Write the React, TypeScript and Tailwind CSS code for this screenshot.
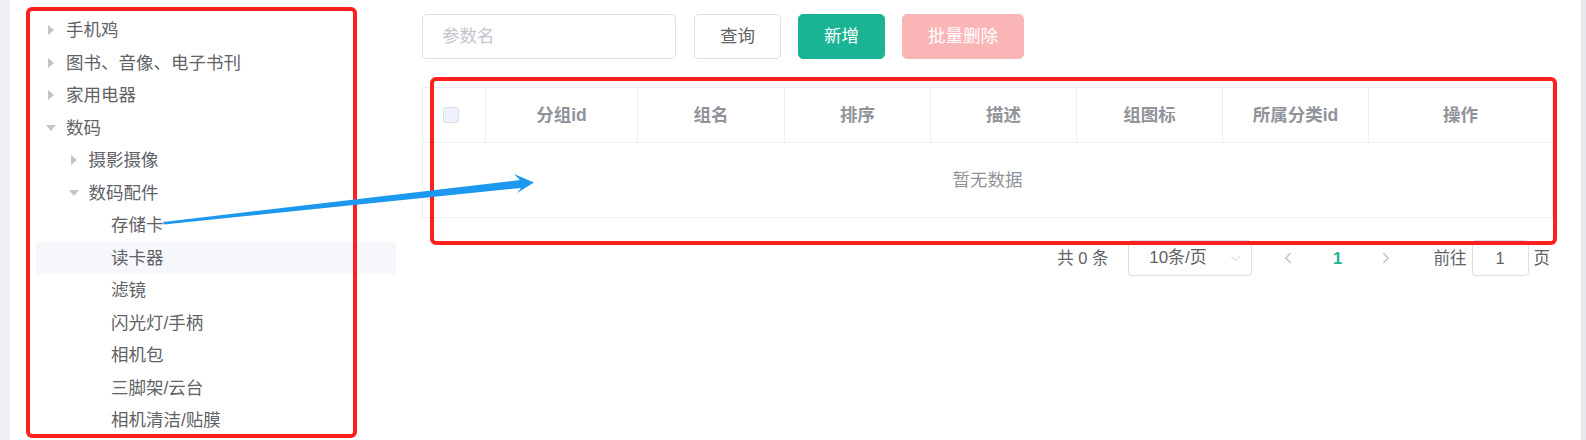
import { ChevronDown, ChevronLeft, ChevronRight } from "lucide-react";

type TreeNode = {
    label: string;
    level: number;
    expanded?: boolean;
    leaf?: boolean;
    current?: boolean;
};

const nodes: TreeNode[] = [
    { label: "手机鸡", level: 0 },
    { label: "图书、音像、电子书刊", level: 0 },
    { label: "家用电器", level: 0 },
    { label: "数码", level: 0, expanded: true },
    { label: "摄影摄像", level: 1 },
    { label: "数码配件", level: 1, expanded: true },
    { label: "存储卡", level: 2, leaf: true },
    { label: "读卡器", level: 2, leaf: true, current: true },
    { label: "滤镜", level: 2, leaf: true },
    { label: "闪光灯/手柄", level: 2, leaf: true },
    { label: "相机包", level: 2, leaf: true },
    { label: "三脚架/云台", level: 2, leaf: true },
    { label: "相机清洁/贴膜", level: 2, leaf: true },
];

const columns = [
    { title: "分组id", w: "w-[152px]" },
    { title: "组名", w: "w-[147px]" },
    { title: "排序", w: "w-[146px]" },
    { title: "描述", w: "w-[146px]" },
    { title: "组图标", w: "w-[146px]" },
    { title: "所属分类id", w: "w-[146px]" },
    { title: "操作", w: "flex-1" },
];

const indent = ["pl-0", "pl-[22.5px]", "pl-[45px]"];

function Caret({ expanded }: { expanded?: boolean }) {
    return expanded ? (
        <svg width="10" height="6" viewBox="0 0 10 6">
            <polygon points="0,0 10,0 5,6" fill="#c0c4cc" />
        </svg>
    ) : (
        <svg width="6" height="10" viewBox="0 0 6 10">
            <polygon points="0,0 6,5 0,10" fill="#c0c4cc" />
        </svg>
    );
}

function CategoryTree() {
    return (
        <div className="w-[360px]">
            {nodes.map((node) => (
                <div
                    key={node.label}
                    className={`flex h-[32.5px] items-center ${indent[node.level]} ${node.current ? "bg-[#f5f7fa]" : ""}`}
                >
                    <span className="flex h-[30px] w-[30px] items-center justify-center">
                        {!node.leaf && <Caret expanded={node.expanded} />}
                    </span>
                    <span className="text-[17.5px] leading-[20px] text-[#606266]">{node.label}</span>
                </div>
            ))}
        </div>
    );
}

export default function App() {
    return (
        <div className="relative flex h-[440px] w-[1586px] overflow-hidden bg-white font-['Liberation_Sans','Noto_Sans_CJK_SC',sans-serif]">
            <div className="w-[10px] shrink-0 bg-[#eef0f3]" />

            <aside className="ml-[26px] shrink-0 pt-[14px]">
                <CategoryTree />
            </aside>

            <main className="ml-[26px] w-[1131px] shrink-0 pt-[14px]">
                <div className="flex items-center">
                    <div className="flex h-[45px] w-[254px] items-center rounded-[5px] border border-[#dcdfe6] px-[19px] text-[17.5px] text-[#c0c4cc]">
                        参数名
                    </div>
                    <button className="ml-[18px] h-[45px] rounded-[5px] border border-[#dcdfe6] bg-white px-[25px] text-[17.5px] text-[#606266]">
                        查询
                    </button>
                    <button className="ml-[17px] h-[45px] rounded-[5px] border border-[#1ab394] bg-[#1ab394] px-[25px] text-[17.5px] text-white">
                        新增
                    </button>
                    <button className="ml-[17px] h-[45px] rounded-[5px] border border-[#fab6b6] bg-[#fab6b6] px-[25px] text-[17.5px] text-white">
                        批量删除
                    </button>
                </div>

                <div className="mt-[28px] border border-[#ebeef5]">
                    <div className="flex h-[55px] border-b border-[#ebeef5]">
                        <div className="flex w-[63px] items-center justify-center border-r border-[#ebeef5] pr-[6px]">
                            <span className="h-[16px] w-[16px] rounded-[3px] border border-[#dcdfe6] bg-[#edf2fc]" />
                        </div>
                        {columns.map((col, i) => (
                            <div
                                key={col.title}
                                className={`flex ${col.w} items-center justify-center text-[17.5px] font-bold text-[#909399] ${i < columns.length - 1 ? "border-r border-[#ebeef5]" : ""}`}
                            >
                                {col.title}
                            </div>
                        ))}
                    </div>
                    <div className="flex h-[74px] items-center justify-center text-[17.5px] text-[#909399]">
                        暂无数据
                    </div>
                </div>

                <div className="mt-[22px] flex h-[36px] items-center justify-end pr-[3px] text-[16.5px] text-[#606266]">
                    <span>共 0 条</span>
                    <div className="ml-[19px] flex h-[36px] w-[124px] items-center rounded-[4px] border border-[#dcdfe6]">
                        <span className="flex-1 text-center text-[17px]">10条/页</span>
                        <ChevronDown className="mr-[8px] h-[15px] w-[15px] text-[#c0c4cc]" strokeWidth={1.5} />
                    </div>
                    <button className="ml-[14px] flex h-[36px] w-[44px] items-center justify-center text-[#c0c4cc]">
                        <ChevronLeft className="h-[18px] w-[18px]" strokeWidth={2} />
                    </button>
                    <span className="ml-[4px] flex h-[36px] w-[48px] items-center justify-center font-bold text-[#1ab394]">1</span>
                    <button className="ml-[2px] flex h-[36px] w-[44px] items-center justify-center text-[#c0c4cc]">
                        <ChevronRight className="h-[18px] w-[18px]" strokeWidth={2} />
                    </button>
                    <span className="ml-[26px]">前往</span>
                    <div className="ml-[5px] flex h-[36px] w-[57px] items-center justify-center rounded-[4px] border border-[#dcdfe6]">
                        1
                    </div>
                    <span className="ml-[5px]">页</span>
                </div>
            </main>

            <div className="flex-1" />
            <div className="w-[5px] shrink-0 bg-[#e6e9ed]" />

            {/* annotations drawn on top of the screenshot */}
            <div className="pointer-events-none absolute left-[26px] top-[7px] h-[431px] w-[331px] rounded-[6px] border-[4px] border-[#ff1f1f]" />
            <div className="pointer-events-none absolute left-[430px] top-[77px] h-[168px] w-[1127px] rounded-[6px] border-[4px] border-[#ff1f1f]" />
            <svg className="pointer-events-none absolute left-0 top-0" width="1586" height="440">
                <polygon
                    points="163,222 520,180 514,174 534,182.5 517,193 521,188 164,224.5"
                    fill="#1c98ee"
                />
            </svg>
        </div>
    );
}
